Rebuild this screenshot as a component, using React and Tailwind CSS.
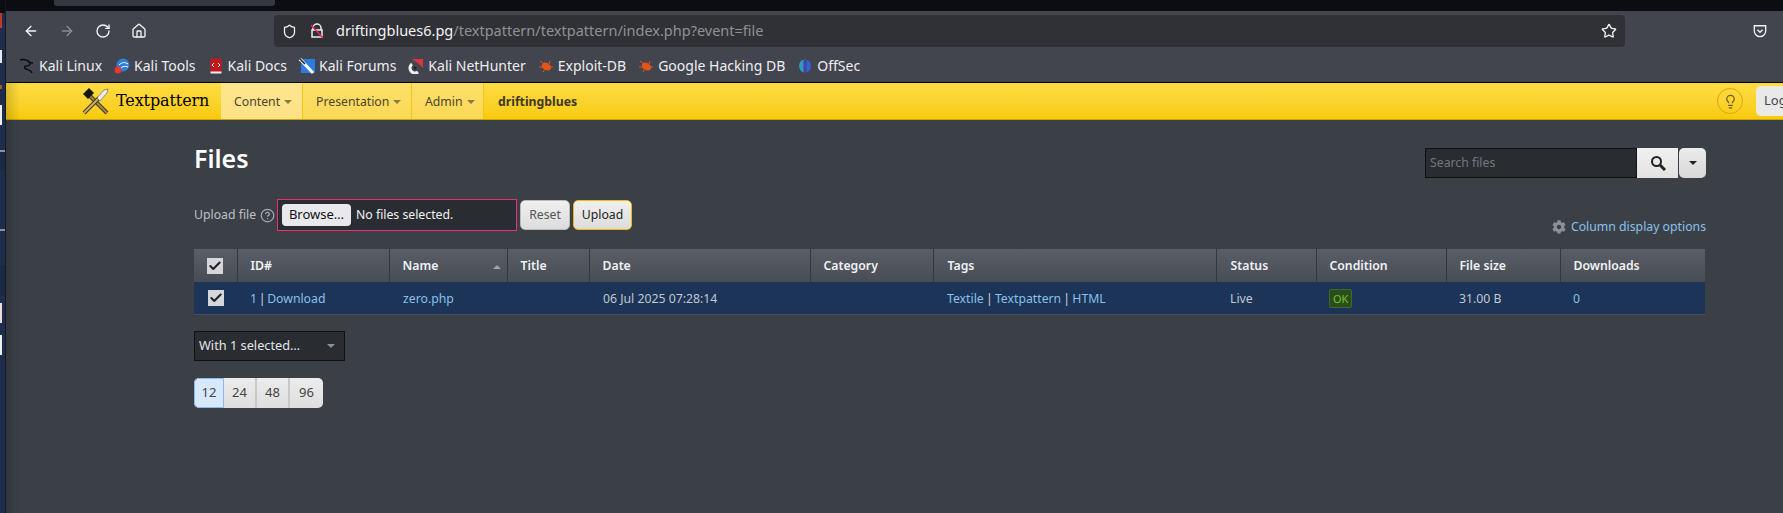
import React from 'react';
import { ArrowLeft, ArrowRight, RotateCw, Home, Shield, Star, Lightbulb, CircleHelp, Check } from 'lucide-react';
import { FaCog } from 'react-icons/fa';

const KaliIcon = () => (
  <svg width="16" height="16" viewBox="0 0 16 16" fill="none" stroke="#0c0c0c" strokeWidth="1.400">
    <path d="M1 2c4-1 8 0 10 3 1 2-2 3-4 3s-2 2 0 3 5 1 6 4M9 4l5 1" />
  </svg>
);
const ToolsIcon = () => (
  <svg width="16" height="16" viewBox="0 0 16 16">
    <circle cx="9" cy="7" r="6.500" fill="#2d7fd8" />
    <path d="M5 7c3-3 6-3 9-1M7 10c2-2 4-2 7-1" stroke="#fff" fill="none" />
    <circle cx="4" cy="12" r="3.500" fill="#e53935" />
  </svg>
);
const DocsIcon = () => (
  <svg width="16" height="16" viewBox="0 0 16 16">
    <rect x="2.500" y="0.500" width="11" height="14" rx="1" fill="#c4161c" />
    <rect x="2.500" y="13.500" width="11" height="2" fill="#eee" />
    <path d="M6 5l-2 2 2 2M10 5l2 2-2 2" stroke="#fff" fill="none" />
  </svg>
);
const ForumsIcon = () => (
  <svg width="16" height="16" viewBox="0 0 16 16">
    <rect x="2" y="1" width="14" height="14" fill="#2b7de0" />
    <path d="M1 1l13 14" stroke="#fff" strokeWidth="3" />
    <path d="M1 1l5 5" stroke="#222" strokeWidth="1.500" />
  </svg>
);
const HunterIcon = () => (
  <svg width="16" height="16" viewBox="0 0 16 16">
    <path d="M4 1h11v9l-4-4z" fill="#d9343f" />
    <path d="M4 6a5 5 0 1 0 6 8" stroke="#eee" strokeWidth="3" fill="none" />
    <circle cx="7" cy="10" r="1.500" fill="#222" />
  </svg>
);
const BugIcon = () => (
  <svg width="16" height="16" viewBox="0 0 16 16">
    <ellipse cx="8.500" cy="8.500" rx="5" ry="3.500" fill="#e2561b" transform="rotate(30 8.500 8.500)" />
    <path d="M2 3l4 3M1 9l4 0M5 14l2-3M12 3l-1 3M15 9l-3 0" stroke="#e2561b" />
  </svg>
);
const OffSecIcon = () => (
  <svg width="16" height="16" viewBox="0 0 16 16">
    <path d="M6.500 1.500a7 7 0 0 0 0 13z" fill="#2a9bc9" />
    <path d="M9.500 1.500a7 7 0 0 1 0 13z" fill="#2f63d8" />
    <rect x="7.300" y="1" width="1.400" height="14.500" fill="#5b3bd0" />
  </svg>
);

const bookmarks = [
  { label: 'Kali Linux', icon: <KaliIcon /> },
  { label: 'Kali Tools', icon: <ToolsIcon /> },
  { label: 'Kali Docs', icon: <DocsIcon /> },
  { label: 'Kali Forums', icon: <ForumsIcon /> },
  { label: 'Kali NetHunter', icon: <HunterIcon /> },
  { label: 'Exploit-DB', icon: <BugIcon /> },
  { label: 'Google Hacking DB', icon: <BugIcon /> },
  { label: 'OffSec', icon: <OffSecIcon /> },
];

const TxpLogo = () => (
  <svg width="27" height="28" viewBox="0 0 27 28">
    <path d="M6 7l19 19" stroke="#4a3f1e" strokeWidth="4" />
    <path d="M6 7l19 19" stroke="#a08a45" strokeWidth="1.800" />
    <path d="M1 7l6-6 5 5-6 6z" fill="#161616" />
    <path d="M2 26l15-15" stroke="#4a3f1e" strokeWidth="4" />
    <path d="M2 26l15-15" stroke="#c8b068" strokeWidth="1.800" />
    <path d="M15 11l7-8 4-1-1 4-7 8z" fill="#ececec" stroke="#555" strokeWidth="0.600" />
  </svg>
);

const Caret = ({ className }) => (
  <span className={`inline-block w-0 h-0 border-x-[4px] border-x-transparent border-t-[4px] ${className}`} />
);

const NavItem = ({ label, active, width }) => (
  <div className={`h-full flex items-center gap-[4px] pl-[13px] pt-[2px] border-r border-[#f5c518] ${width} ${active ? 'bg-gradient-to-b from-[#fee68e] to-[#fde185]' : 'bg-gradient-to-b from-[#fde06a] to-[#fbd855]'}`}>
    <span>{label}</span>
    <Caret className="border-t-[#8a7a45] mb-px" />
  </div>
);

const columns = [
  { label: 'ID#', w: 'w-[152px]', pl: 'pl-[13px]' },
  { label: 'Name', w: 'w-[118px]', pl: 'pl-[13px]', sorted: true },
  { label: 'Title', w: 'w-[82px]', pl: 'pl-[13px]' },
  { label: 'Date', w: 'w-[221px]', pl: 'pl-[13px]' },
  { label: 'Category', w: 'w-[123px]', pl: 'pl-[13px]' },
  { label: 'Tags', w: 'w-[283px]', pl: 'pl-[14px]' },
  { label: 'Status', w: 'w-[100px]', pl: 'pl-[14px]' },
  { label: 'Condition', w: 'w-[130px]', pl: 'pl-[13px]' },
  { label: 'File size', w: 'w-[114px]', pl: 'pl-[13px]' },
  { label: 'Downloads', w: 'w-[145px]', pl: 'pl-[13px]' },
];

const Tick = () => (
  <span className="w-4 h-4 bg-[#d4d6da] flex items-center justify-center mx-auto">
    <Check size={14} strokeWidth={3.500} className="text-[#222]" />
  </span>
);

const Link = ({ children }) => <span className="text-[#8ac0ea]">{children}</span>;

export default function App() {
  return (
    <div className="w-[1783px] h-[513px] overflow-hidden flex bg-[#3b4047] font-['Noto_Sans',sans-serif]">
      {/* desktop strip on the left */}
      <div className="w-[6px] shrink-0 bg-[#1f2d4d] border-r border-[#15181f] flex flex-col items-start">
        <div className="h-[13px] w-full bg-[#0c0d12]" />
        <div className="h-[15px] w-[2px] bg-[#c0392b]" />
        <div className="h-[22px]" />
        <div className="h-[13px] w-[2px] bg-[#e8e8e8]" />
        <div className="h-[22px]" />
        <div className="h-[4px] w-[2px] bg-[#a05a2c]" />
        <div className="h-[16px]" />
        <div className="h-[20px] w-[2px] bg-[#eeeeee]" />
        <div className="h-[25px]" />
        <div className="h-[2px] w-full bg-[#8a93a5]" />
        <div className="h-[19px] w-full bg-[#1a2a45]" />
        <div className="h-[58px]" />
        <div className="h-[2px] w-full bg-[#8a93a5]" />
        <div className="h-[34px]" />
        <div className="h-[31px] w-full bg-[#1a2a45]" />
        <div className="h-[7px]" />
        <div className="h-[20px] w-[2px] bg-[#f0dada]" />
        <div className="h-[12px]" />
        <div className="h-[20px] w-[2px] bg-[#eeeeee]" />
      </div>

      <div className="relative flex-1 min-w-0 flex flex-col">
        {/* tab strip */}
        <div className="h-[11px] bg-[#0c0d12] pl-[48px] shrink-0">
          <div className="w-[221px] h-[6px] bg-[#35383f] rounded-b-[3px]" />
        </div>

        {/* toolbar */}
        <div className="h-[36px] shrink-0 bg-[#42454e] flex items-center pt-[4px] text-[#f4f4f5]">
          <div className="flex items-center gap-[20px] pl-[17px] w-[268px]">
            <ArrowLeft size={16} strokeWidth={2} />
            <ArrowRight size={16} strokeWidth={2} className="opacity-40" />
            <RotateCw size={16} strokeWidth={2} />
            <Home size={16} strokeWidth={2} />
          </div>
          <div className="w-[1351px] h-[32px] bg-[#2f3137] rounded-[4px] flex items-center pl-[8px] pr-[8px] text-[14.500px]">
            <Shield size={15} strokeWidth={2} />
            <svg width="16" height="16" viewBox="0 0 16 16" fill="none" className="ml-[12px] mr-[11px]">
              <path d="M4 7V5a4 4 0 0 1 8 0v2M3 7h10v7H3z" stroke="#eee" strokeWidth="1.500" />
              <path d="M2 2l12 13" stroke="#e22850" strokeWidth="1.500" />
            </svg>
            <span className="text-[#f4f4f5]">driftingblues6.pg</span>
            <span className="text-[#8f9094]">/textpattern/textpattern/index.php?event=file</span>
            <Star size={16} strokeWidth={2} className="ml-auto" />
          </div>
          <svg width="14" height="14" viewBox="0 0 16 16" fill="none" className="ml-[128px]">
            <path d="M1.500 2h13v6a6.500 6.500 0 0 1-13 0z" stroke="#f4f4f5" strokeWidth="1.500" />
            <path d="M5 6.500l3 3 3-3" stroke="#f4f4f5" strokeWidth="1.500" />
          </svg>
        </div>

        {/* bookmarks */}
        <div className="h-[36px] shrink-0 bg-[#42454e] border-b border-black flex items-center gap-[12px] pl-[13px] pt-[2px] text-[14px] text-[#eeeef0]">
          {bookmarks.map((b) => (
            <div key={b.label} className="flex items-center gap-[4px]">
              {b.icon}
              <span>{b.label}</span>
            </div>
          ))}
        </div>

        {/* textpattern header */}
        <div className="h-[37px] shrink-0 bg-gradient-to-b from-[#ffdc42] to-[#f8ca06] border-b border-[#c9a40a] flex items-center text-[12.250px] text-[#4a4530]">
          <div className="w-[215px] h-full flex items-center pl-[76px] gap-[7px] text-black">
            <TxpLogo />
            <span className="font-['DejaVu_Serif',serif] text-[16px] tracking-[-0.100px]">Textpattern</span>
          </div>
          <NavItem label="Content" active width="w-[82px]" />
          <NavItem label="Presentation" width="w-[109px]" />
          <NavItem label="Admin" width="w-[72px]" />
          <span className="ml-[14px] pt-[2px] font-bold text-[#3c3826]">driftingblues</span>
          <div className="ml-auto flex items-center gap-[13px]">
            <div className="w-[26px] h-[26px] rounded-full border border-[#d8a90a] flex items-center justify-center">
              <Lightbulb size={15} className="text-[#6d5c1a]" />
            </div>
            <div className="w-[27px] h-[30px] bg-[#e9e9e9] rounded-l-[5px] border border-[#f2ead0] border-r-0 pl-[7px] flex items-center text-[13px] text-[#444] overflow-hidden">
              Log
            </div>
          </div>
        </div>

        {/* page content */}
        <div className="w-[1512px] ml-[188px] text-[12.250px] text-[#d4d6da]">
          <div className="flex items-start justify-between pt-[20px]">
            <h1 className="text-[25px] leading-[37px] font-semibold text-white">Files</h1>
            <div className="flex mt-[8px] h-[30px]">
              <div className="w-[212px] bg-[#292d32] border border-[#111] pl-[4px] pt-px flex items-center text-[#74787e]">
                Search files
              </div>
              <div className="w-[41px] bg-gradient-to-b from-[#f0f0f0] to-[#e2e2e2] flex items-center justify-center">
                <svg width="16" height="16" viewBox="0 0 16 16" fill="none" stroke="#222">
                  <circle cx="6.500" cy="6.500" r="4.500" strokeWidth="2" />
                  <path d="M10 10l5 5" strokeWidth="3" />
                </svg>
              </div>
              <div className="w-[27px] ml-px bg-gradient-to-b from-[#ececec] to-[#d8d8d8] rounded-[5px] flex items-center justify-center">
                <Caret className="border-t-[#222]" />
              </div>
            </div>
          </div>

          <div className="flex items-center justify-between mt-[21px] h-[32px]">
            <div className="flex items-center">
              <span className="w-[66px] text-[#bcc0c6]">Upload file</span>
              <CircleHelp size={15} className="text-[#a5a9af]" />
              <div className="ml-[2px] w-[240px] h-[32px] bg-[#292d32] border border-[#ee2d7a] flex items-center pl-[4px] text-[#f0f0f0]">
                <span className="w-[69px] h-[22px] bg-[#e9e9ed] rounded-[4px] text-[#111] text-[13px] flex items-center justify-center">Browse…</span>
                <span className="ml-[5px]">No files selected.</span>
              </div>
              <button className="ml-[3px] w-[50px] h-[30px] bg-gradient-to-b from-[#f0f0f0] to-[#dcdcdc] rounded-[5px] border border-[#bbb] text-[#555]">Reset</button>
              <button className="ml-[3px] w-[59px] h-[30px] bg-gradient-to-b from-[#f0f0f0] to-[#dcdcdc] rounded-[5px] border border-[#f0b90b] text-[#222]">Upload</button>
            </div>
            <div className="flex items-center gap-[5px] mt-[24px]">
              <FaCog size={14} className="text-[#8b9098]" />
              <Link>Column display options</Link>
            </div>
          </div>

          <table className="mt-[18px] w-[1511px] table-fixed border-collapse">
            <thead>
              <tr className="h-[33px] bg-gradient-to-b from-[#5a5e66] to-[#484c54]">
                <th className="w-[43px] border-r border-[#33373e]"><Tick /></th>
                {columns.map((c) => (
                  <th key={c.label} className={`${c.w} ${c.pl} pt-[2px] border-r border-[#33373e] last:border-r-0 text-left font-semibold text-[#f0f1f3]`}>
                    <div className="flex items-center justify-between pr-[6px]">
                      {c.label}
                      {c.sorted && <span className="w-0 h-0 border-x-[4px] border-x-transparent border-b-[4px] border-b-[#a0a4aa]" />}
                    </div>
                  </th>
                ))}
              </tr>
            </thead>
            <tbody>
              <tr className="h-[32px] bg-[#1c3457] border-b border-[#4b5058] [word-spacing:-1.500px]">
                <td><Tick /></td>
                <td className="pl-[13px] pt-[2px]"><Link>1</Link> | <Link>Download</Link></td>
                <td className="pl-[14px] pt-[2px]"><Link>zero.php</Link></td>
                <td />
                <td className="pl-[14px] pt-[2px] text-[#c0c8d2] [word-spacing:0]">06 Jul 2025 07:28:14</td>
                <td />
                <td className="pl-[14px] pt-[2px] [word-spacing:-1px]"><Link>Textile</Link> | <Link>Textpattern</Link> | <Link>HTML</Link></td>
                <td className="pl-[14px] pt-[2px] text-[#c0c8d2]">Live</td>
                <td className="pl-[13px] pt-[2px]">
                  <span className="px-[3px] py-px bg-[#2c4c1c] border border-[#3d6b25] rounded-[2px] text-[#70c030] text-[11px]">OK</span>
                </td>
                <td className="pl-[13px] pt-[2px] text-[#c0c8d2] [word-spacing:0]">31.00 B</td>
                <td className="pl-[13px] pt-[2px]"><Link>0</Link></td>
              </tr>
            </tbody>
          </table>

          <div className="mt-[16px] w-[151px] h-[30px] bg-[#292d32] border border-[#111] flex items-center justify-between pl-[4px] pr-[9px] text-[12.750px] text-[#e4e5e7]">
            With 1 selected…
            <Caret className="border-t-[#8a9098]" />
          </div>

          <div className="mt-[17px] w-[129px] h-[30px] flex rounded-[5px] overflow-hidden bg-gradient-to-b from-[#ececec] to-[#dedede] text-[13px] text-[#444]">
            <div className="w-[30px] bg-[#d8e8fd] border border-[#8ab8f0] rounded-l-[5px] flex items-center justify-center">12</div>
            <div className="w-[33px] border-r-2 border-[#c8c8c8] flex items-center justify-center">24</div>
            <div className="w-[33px] border-r-2 border-[#c8c8c8] flex items-center justify-center">48</div>
            <div className="w-[33px] flex items-center justify-center">96</div>
          </div>
        </div>

        {/* soft shadow along the window edge */}
        <div className="absolute left-0 top-[83px] bottom-0 w-[14px] bg-gradient-to-r from-black/15 to-transparent pointer-events-none" />
      </div>
    </div>
  );
}
